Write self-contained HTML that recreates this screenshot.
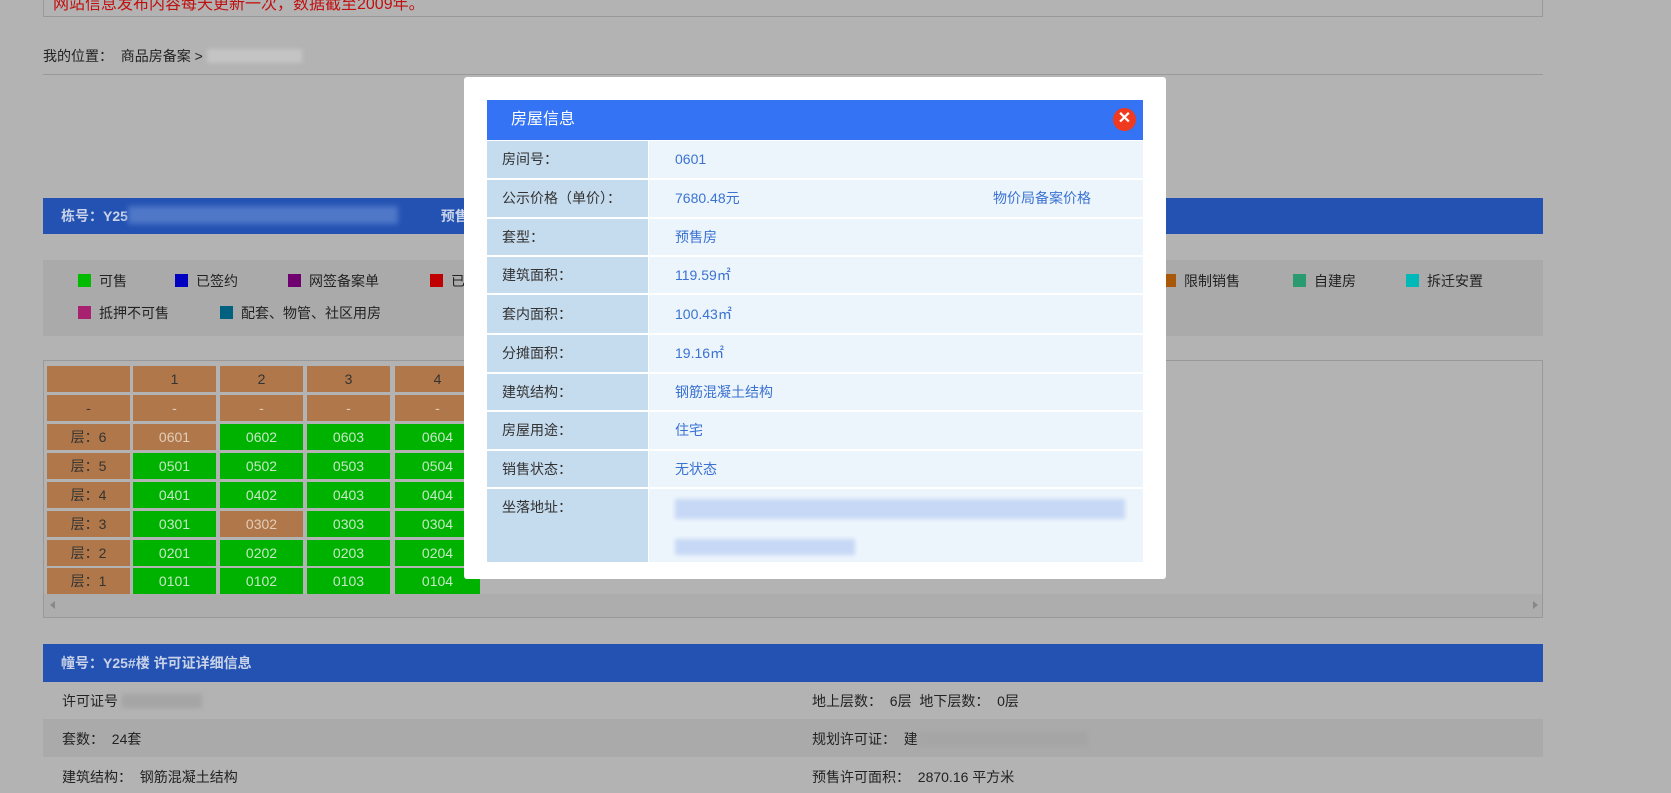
<!DOCTYPE html>
<html><head><meta charset="utf-8"><style>
*{margin:0;padding:0;box-sizing:border-box}
body{width:1671px;height:793px;overflow:hidden;background:#b3b3b3;font-family:"Liberation Sans","Noto Sans CJK SC",sans-serif;font-size:14px;color:#222;position:relative}
.abs{position:absolute}
.bar{position:absolute;left:43px;width:1500px;background:#2352b3;color:#c9d3e8;font-weight:bold;font-size:14px;padding-left:18px}
.lg{position:absolute;font-size:14px;color:#222;line-height:16px}
.lg i{display:inline-block;width:13px;height:13px;vertical-align:-1px;margin-right:8px}
.c{position:absolute;height:26px;width:83px;text-align:center;line-height:26px;font-size:14px}
.b{background:#b0784a;color:#333}
.g{background:#00b200;color:#c6e8c6}
.bw{background:#b0784a;color:#e2cdb8}
.row{position:absolute;left:487px;width:656px}
.row .l{position:absolute;left:0;top:0;width:161px;background:#c5dbee;color:#333;padding-left:15px}
.row .v{position:absolute;left:162px;top:0;right:0;background:#edf5fc;color:#3a72d2;padding-left:26px}
</style></head><body>
<div class="abs" style="left:43px;top:-2px;width:1500px;height:19px;border:1px solid #999;border-top:none;background:#b3b3b3"></div>
<div class="abs" style="left:53px;top:-10px;color:#c01010;font-size:16px">网站信息发布内容每天更新一次，数据截至2009年。</div>
<div class="abs" style="left:43px;top:46px;font-size:14px">我的位置：&nbsp; 商品房备案 &gt; <span style="display:inline-block;width:95px;height:14px;background:#c4c4c4;vertical-align:-2px;filter:blur(2px)"></span></div>
<div class="abs" style="left:43px;top:74px;width:1500px;height:1px;background:#999"></div>

<div class="bar" style="top:198px;height:36px;line-height:36px">栋号：Y25<span style="display:inline-block;width:270px;height:18px;background:#5078c8;vertical-align:-3px;filter:blur(3px)"></span>&nbsp;&nbsp;&nbsp;&nbsp;&nbsp;&nbsp;&nbsp;&nbsp;&nbsp;&nbsp; 预售</div>

<div class="abs" style="left:43px;top:260px;width:1500px;height:76px;background:#aaaaaa"></div>
<div class="lg" style="left:78px;top:273px"><i style="background:#00bb00"></i>可售</div>
<div class="lg" style="left:175px;top:273px"><i style="background:#0000c0"></i>已签约</div>
<div class="lg" style="left:288px;top:273px"><i style="background:#700070"></i>网签备案单</div>
<div class="lg" style="left:430px;top:273px"><i style="background:#c00000"></i>已</div>
<div class="lg" style="left:1163px;top:273px"><i style="background:#a85808"></i>限制销售</div>
<div class="lg" style="left:1293px;top:273px"><i style="background:#2a9a70"></i>自建房</div>
<div class="lg" style="left:1406px;top:273px"><i style="background:#00b8b8"></i>拆迁安置</div>
<div class="lg" style="left:78px;top:305px"><i style="background:#a82070"></i>抵押不可售</div>
<div class="lg" style="left:220px;top:305px"><i style="background:#006080"></i>配套、物管、社区用房</div>

<div class="abs" style="left:43px;top:360px;width:1500px;height:258px;border:1px solid #999"></div>
<div class="abs" style="left:44px;top:594px;width:1498px;height:23px;background:#adadad"></div>
<div class="abs" style="left:50px;top:601px;width:0;height:0;border:4px solid transparent;border-right:5px solid #888;border-left:none"></div>
<div class="abs" style="left:1533px;top:601px;width:0;height:0;border:4px solid transparent;border-left:5px solid #888;border-right:none"></div>

<div class="c b" style="left:47px;top:366px"></div><div class="c b" style="left:133px;top:366px">1</div><div class="c b" style="left:220px;top:366px">2</div><div class="c b" style="left:307px;top:366px">3</div><div class="c b" style="left:395px;top:366px;width:85px">4</div>
<div class="c b" style="left:47px;top:395px">-</div><div class="c bw" style="left:133px;top:395px">-</div><div class="c bw" style="left:220px;top:395px">-</div><div class="c bw" style="left:307px;top:395px">-</div><div class="c bw" style="left:395px;top:395px;width:85px">-</div>
<div class="c b" style="left:47px;top:424px">层：6</div><div class="c bw" style="left:133px;top:424px">0601</div><div class="c g" style="left:220px;top:424px">0602</div><div class="c g" style="left:307px;top:424px">0603</div><div class="c g" style="left:395px;top:424px;width:85px">0604</div>
<div class="c b" style="left:47px;top:453px">层：5</div><div class="c g" style="left:133px;top:453px">0501</div><div class="c g" style="left:220px;top:453px">0502</div><div class="c g" style="left:307px;top:453px">0503</div><div class="c g" style="left:395px;top:453px;width:85px">0504</div>
<div class="c b" style="left:47px;top:482px">层：4</div><div class="c g" style="left:133px;top:482px">0401</div><div class="c g" style="left:220px;top:482px">0402</div><div class="c g" style="left:307px;top:482px">0403</div><div class="c g" style="left:395px;top:482px;width:85px">0404</div>
<div class="c b" style="left:47px;top:511px">层：3</div><div class="c g" style="left:133px;top:511px">0301</div><div class="c bw" style="left:220px;top:511px">0302</div><div class="c g" style="left:307px;top:511px">0303</div><div class="c g" style="left:395px;top:511px;width:85px">0304</div>
<div class="c b" style="left:47px;top:540px">层：2</div><div class="c g" style="left:133px;top:540px">0201</div><div class="c g" style="left:220px;top:540px">0202</div><div class="c g" style="left:307px;top:540px">0203</div><div class="c g" style="left:395px;top:540px;width:85px">0204</div>
<div class="c b" style="left:47px;top:568px">层：1</div><div class="c g" style="left:133px;top:568px">0101</div><div class="c g" style="left:220px;top:568px">0102</div><div class="c g" style="left:307px;top:568px">0103</div><div class="c g" style="left:395px;top:568px;width:85px">0104</div>

<div class="bar" style="top:644px;height:38px;line-height:38px">幢号：Y25#楼 许可证详细信息</div>
<div class="abs" style="left:43px;top:719px;width:1500px;height:38px;background:#aaaaaa"></div>
<div class="abs" style="left:62px;top:691px">许可证号 <span style="display:inline-block;width:80px;height:14px;background:#a5a5a5;vertical-align:-2px;filter:blur(2px)"></span></div>
<div class="abs" style="left:62px;top:729px">套数：&nbsp; 24套</div>
<div class="abs" style="left:62px;top:767px">建筑结构：&nbsp; 钢筋混凝土结构</div>
<div class="abs" style="left:812px;top:691px">地上层数：&nbsp; 6层 &nbsp;地下层数：&nbsp; 0层</div>
<div class="abs" style="left:812px;top:729px">规划许可证：&nbsp; 建<span style="display:inline-block;width:170px;height:14px;background:#a5a5a5;vertical-align:-2px;filter:blur(2px)"></span></div>
<div class="abs" style="left:812px;top:767px">预售许可面积：&nbsp; 2870.16 平方米</div>

<div class="abs" style="left:464px;top:77px;width:702px;height:502px;background:#fff;border-radius:3px"></div>
<div class="abs" style="left:487px;top:100px;width:656px;height:40px;background:#3473f3;color:#fff;font-size:16px;line-height:40px;padding-left:24px">房屋信息</div>
<div class="abs" style="left:1113px;top:108px;width:23px;height:23px;border-radius:50%;background:#f03a20;color:#fff;text-align:center;line-height:22px;font-size:16px;font-weight:bold">✕</div>

<div class="row" style="top:141px;height:37px;line-height:37px"><div class="l" style="height:37px">房间号：</div><div class="v" style="height:37px">0601</div></div>
<div class="row" style="top:180px;height:37px;line-height:37px"><div class="l" style="height:37px">公示价格（单价）：</div><div class="v" style="height:37px">7680.48元<span style="position:absolute;left:344px">物价局备案价格</span></div></div>
<div class="row" style="top:219px;height:36px;line-height:36px"><div class="l" style="height:36px">套型：</div><div class="v" style="height:36px">预售房</div></div>
<div class="row" style="top:257px;height:36px;line-height:36px"><div class="l" style="height:36px">建筑面积：</div><div class="v" style="height:36px">119.59㎡</div></div>
<div class="row" style="top:295px;height:38px;line-height:38px"><div class="l" style="height:38px">套内面积：</div><div class="v" style="height:38px">100.43㎡</div></div>
<div class="row" style="top:335px;height:37px;line-height:37px"><div class="l" style="height:37px">分摊面积：</div><div class="v" style="height:37px">19.16㎡</div></div>
<div class="row" style="top:374px;height:36px;line-height:36px"><div class="l" style="height:36px">建筑结构：</div><div class="v" style="height:36px">钢筋混凝土结构</div></div>
<div class="row" style="top:412px;height:37px;line-height:37px"><div class="l" style="height:37px">房屋用途：</div><div class="v" style="height:37px">住宅</div></div>
<div class="row" style="top:451px;height:36px;line-height:36px"><div class="l" style="height:36px">销售状态：</div><div class="v" style="height:36px">无状态</div></div>
<div class="row" style="top:489px;height:73px;line-height:36px"><div class="l" style="height:73px">坐落地址：</div><div class="v" style="height:73px">
<span style="position:absolute;left:26px;top:10px;width:450px;height:20px;background:#c6d8f6;filter:blur(2px)"></span>
<span style="position:absolute;left:26px;top:50px;width:180px;height:16px;background:#c6d8f6;filter:blur(2px)"></span></div></div>
</body></html>
